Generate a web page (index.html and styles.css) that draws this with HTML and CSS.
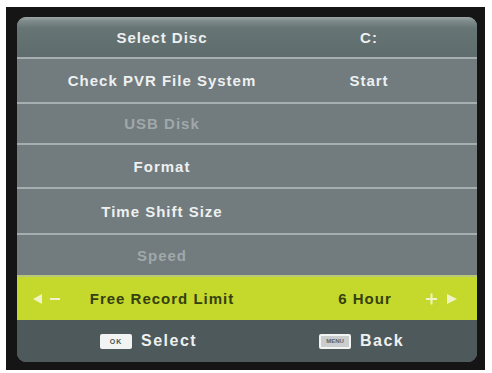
FILE: index.html
```html
<!DOCTYPE html>
<html lang="en">
<head>
    <meta charset="UTF-8">
    <title>PVR File System</title>
    <link rel="stylesheet" href="styles.css">
</head>
<body>
    <div class="tv-frame">
        <div class="osd-panel">
            <!-- Menu rows -->
            <div class="osd-row osd-row-first">
                <span class="osd-label">Select Disc</span>
                <span class="osd-value">C:</span>
            </div>
            <div class="osd-row">
                <span class="osd-label">Check PVR File System</span>
                <span class="osd-value">Start</span>
            </div>
            <div class="osd-row osd-row-disabled">
                <span class="osd-label">USB Disk</span>
            </div>
            <div class="osd-row">
                <span class="osd-label">Format</span>
            </div>
            <div class="osd-row">
                <span class="osd-label">Time Shift Size</span>
            </div>
            <div class="osd-row osd-row-disabled">
                <span class="osd-label">Speed</span>
            </div>
            <div class="osd-row osd-row-active">
                <span class="osd-arrows osd-arrows-left">
                    <svg width="28" height="10" viewBox="0 0 28 10">
                        <polygon points="0,5 9,0 9,10" fill="#eef4c8"/>
                        <rect x="17" y="4" width="10" height="2" fill="#eef4c8"/>
                    </svg>
                </span>
                <span class="osd-label">Free Record Limit</span>
                <span class="osd-value">6 Hour</span>
                <span class="osd-arrows osd-arrows-right">
                    <svg width="32" height="12" viewBox="0 0 32 12">
                        <rect x="0" y="5" width="11" height="2" fill="#eef4c8"/>
                        <rect x="4.5" y="0.5" width="2" height="11" fill="#eef4c8"/>
                        <polygon points="21,1 31,6 21,11" fill="#eef4c8"/>
                    </svg>
                </span>
            </div>

            <!-- Key hints -->
            <div class="osd-footer">
                <div class="key-hint">
                    <span class="key-box">OK</span>
                    <span>Select</span>
                </div>
                <div class="key-hint">
                    <span class="key-box key-box-menu">MENU</span>
                    <span>Back</span>
                </div>
            </div>
        </div>
    </div>
</body>
</html>
```

FILE: styles.css
```css
:root {
    --frame-color: #151515;
    --row-color: #727b7e;
    --separator: #a6aeb0;
    --footer-color: #4e595b;
    --active-color: #c4d92b;
    --text-light: #edf0f0;
    --text-dim: #a0a8aa;
    --text-dark: #36400f;
}

* {
    box-sizing: border-box;
    margin: 0;
    padding: 0;
}

body {
    background-color: #ffffff;
    font-family: 'Liberation Sans', Arial, sans-serif;
    font-weight: bold;
}

.tv-frame {
    width: 479px;
    height: 363px;
    margin: 7px 0 0 6px;
    padding: 10px 8px 8px 11px;
    background-color: var(--frame-color);
}

.osd-panel {
    height: 345px;
    border-radius: 9px;
    overflow: hidden;
    background-color: var(--row-color);
    display: flex;
    flex-direction: column;
}

.osd-row {
    display: grid;
    grid-template-columns: 50px 190px 50px 124px 46px;
    align-items: center;
    height: 44px;
    border-top: 2px solid var(--separator);
    font-size: 15px;
    letter-spacing: 1px;
    color: var(--text-light);
}

/* row heights follow the screen's uneven spacing */
.osd-row:nth-child(2) { height: 45px; }
.osd-row:nth-child(3) { height: 41px; }
.osd-row:nth-child(5) { height: 46px; }
.osd-row:nth-child(6) { height: 42px; }

.osd-row-first {
    height: 40px;
    border-top: none;
    background: linear-gradient(#9aa5a4 0, #7f8b8b 10%, #677474 28%, #5f6c6d 100%);
}

.osd-label {
    grid-column: 1 / 4;
    grid-row: 1;
    text-align: center;
}

.osd-value {
    grid-column: 4;
    grid-row: 1;
    text-align: center;
}

.osd-row-disabled {
    color: var(--text-dim);
}

.osd-row-active {
    height: 45px;
    border-top: 2px solid #b9c77a;
    background-color: var(--active-color);
    color: var(--text-dark);
}

.osd-row-active .osd-label {
    grid-column: 2;
}

.osd-row-active .osd-value {
    padding-right: 8px;
}

.osd-arrows {
    display: flex;
    align-items: center;
    grid-row: 1;
}

.osd-arrows-left {
    grid-column: 1;
    padding-left: 16px;
}

.osd-arrows-right {
    grid-column: 4 / 6;
    justify-self: end;
    padding-right: 19px;
}

.osd-footer {
    flex: 1;
    display: grid;
    grid-template-columns: 219px auto;
    align-items: center;
    padding-left: 83px;
    background-color: var(--footer-color);
    color: var(--text-light);
    font-size: 16px;
    letter-spacing: 1.5px;
}

.key-hint {
    display: flex;
    align-items: center;
    gap: 9px;
}

.key-box {
    width: 32px;
    height: 15px;
    border-radius: 2px;
    background-color: #f2f3f3;
    color: #4a5254;
    font-size: 7px;
    letter-spacing: 1px;
    display: flex;
    align-items: center;
    justify-content: center;
}

.key-box-menu {
    border: 2px solid #f2f3f3;
    background-color: #c9cdce;
    color: #5a6264;
    font-size: 6px;
    letter-spacing: 0;
}
```
